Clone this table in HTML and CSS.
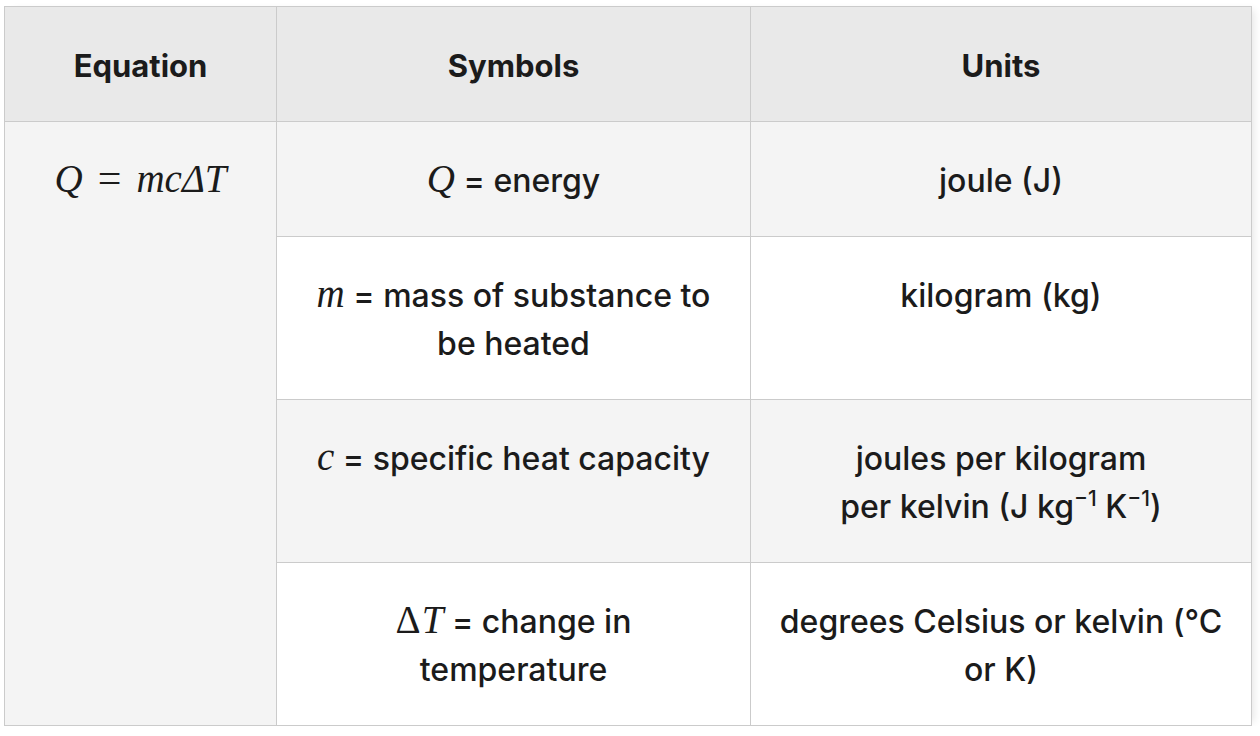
FILE: index.html
```html
<!DOCTYPE html>
<html>
<head>
<meta charset="utf-8">
<link rel="stylesheet" href="styles.css">
</head>
<body>
<div class="wrap">
<table class="tbl">
<colgroup><col class="w1"><col class="w2"><col class="w3"></colgroup>
<thead>
<tr><th>Equation</th><th>Symbols</th><th>Units</th></tr>
</thead>
<tbody>
<tr class="alt">
<td rowspan="4" class="eq"><span class="mi">Q</span><span class="mo">=</span><span class="mi">mc</span><span class="mi">Δ</span><span class="mi">T</span></td>
<td><span class="mi">Q</span> = energy</td>
<td>joule (J)</td>
</tr>
<tr>
<td><span class="mi">m</span> = mass of substance to be heated</td>
<td>kilogram (kg)</td>
</tr>
<tr class="alt">
<td><span class="mi">c</span> = specific heat capacity</td>
<td>joules per kilogram<br>per kelvin (J kg<sup>−1</sup> K<sup>−1</sup>)</td>
</tr>
<tr>
<td><span class="mn">Δ</span><span class="mi">T</span> = change in temperature</td>
<td>degrees Celsius or kelvin (°C or K)</td>
</tr>
</tbody>
</table>
</div>
</body>
</html>
```
FILE: styles.css
```css
html, body {
  margin: 0;
  padding: 0;
  background: #ffffff;
}
.wrap {
  padding: 6px 0 0 4px;
}
.tbl {
  border-collapse: collapse;
  table-layout: fixed;
  width: 1247px;
  font-family: Inter, "Liberation Sans", sans-serif;
  font-size: 32px;
  font-weight: 500;
  line-height: 48px;
  color: #1b1b1b;
  box-shadow: 6px 0 8px -4px rgba(0,0,0,0.10);
}
.w1 { width: 272px; }
.w2 { width: 474px; }
.w3 { width: 501px; }
.tbl th, .tbl td {
  border: 1px solid #cbcbcb;
  padding: 35px 24px 31px;
  text-align: center;
  vertical-align: top;
}
.tbl th {
  background: #e9e9e9;
  font-weight: 700;
  font-size: 31px;
}
.tbl td {
  background: #ffffff;
}
.tbl tr.alt td, .tbl td.eq {
  background: #f4f4f4;
}
.mi, .mn, .mo {
  font-family: "Liberation Serif", "DejaVu Serif", serif;
  font-weight: 400;
  line-height: 0;
}
.mi {
  font-style: italic;
  font-size: 39px;
}
.mn {
  font-size: 39px;
  margin-right: 1px;
}
.mo {
  font-size: 42px;
  padding: 0 15px;
}
sup {
  font-size: 21px;
  line-height: 0;
}
```
